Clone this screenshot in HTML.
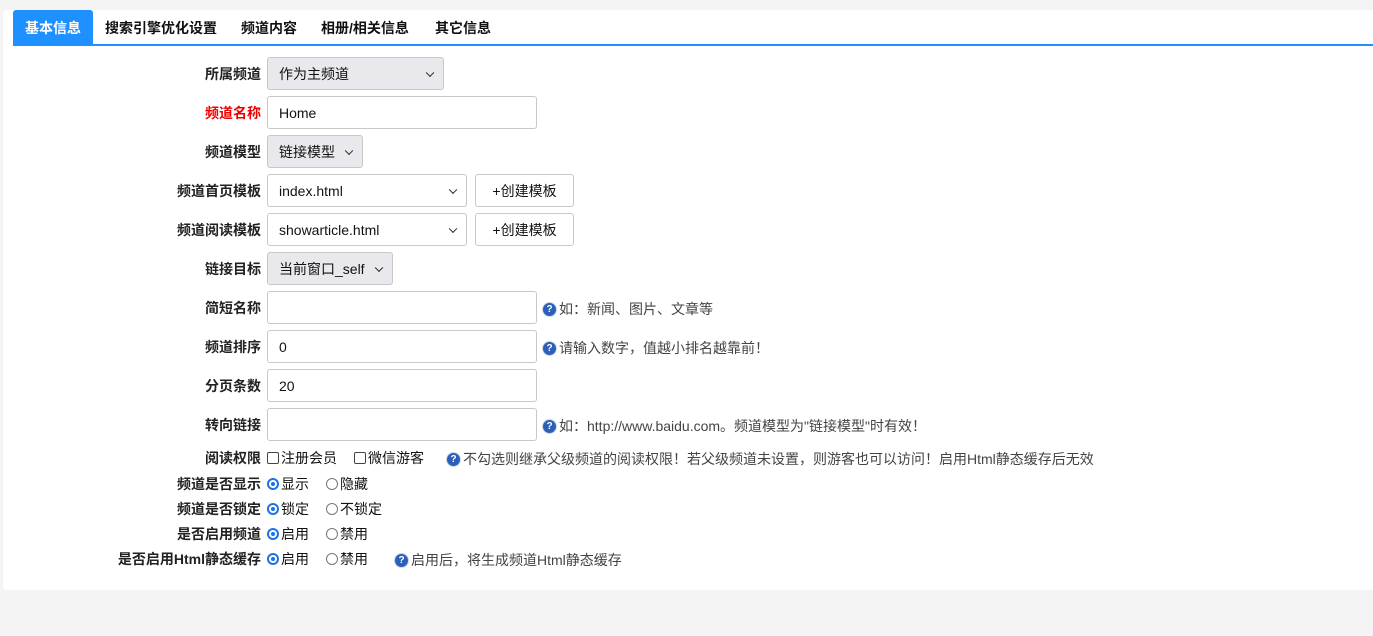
<!DOCTYPE html><html><head><meta charset="utf-8"><style>
body{margin:0;width:1373px;height:636px;background:#f4f4f4;font-family:"Liberation Sans","Noto Sans CJK SC",sans-serif;position:relative;overflow:hidden}
.panel{position:absolute;left:3px;top:10px;width:1380px;height:580px;background:#fff;border-radius:4px}
.tab{position:absolute;top:10px;height:34px;line-height:36px;font-size:14px;font-weight:bold;color:#111}
.line{position:absolute;left:13px;top:44px;width:1360px;height:2px;background:#1e90ff}
.lb{position:absolute;right:1112px;font-size:14px;line-height:18px;font-weight:bold;color:#222;white-space:nowrap;margin-top:1px}
.box{position:absolute;box-sizing:border-box;border:1px solid #c8c8c8;border-radius:3px;background:#fff;font-size:14px;color:#111;padding-left:11px;display:flex;align-items:center;padding-top:1px}
.sel{background:#fff}
.g{background:#e9e9ed}
.sel:after{content:"";position:absolute;right:10px;top:50%;width:5px;height:5px;border-right:1.5px solid #222;border-bottom:1.5px solid #222;transform:translateY(-70%) rotate(45deg)}
.btn{justify-content:center;padding:0;font-size:14px}
.t{position:absolute;font-size:14px;line-height:18px;color:#444;white-space:nowrap;display:flex;align-items:center}
.q{display:inline-block;width:13px;height:13px;border-radius:50%;background:#2b5fb8;color:#fff;font-size:10px;font-weight:bold;text-align:center;line-height:13px;margin-right:3px;box-shadow:0 0 0 1px #c9d6ea}
.r{display:inline-block;width:12px;height:12px;border-radius:50%;border:1px solid #777;box-sizing:border-box;margin-right:2px;position:relative}
.r.on{border:2px solid #1a73e8}
.r.on:after{content:"";position:absolute;left:2px;top:2px;width:4px;height:4px;border-radius:50%;background:#1a73e8}
.c{display:inline-block;width:12px;height:12px;border:1.5px solid #444;box-sizing:border-box;border-radius:2px;margin-right:2px}
</style></head><body>
<div class="panel"></div>
<div class="tab" style="left:13px;width:80px;background:#1e90ff;color:#fff;text-align:center;border-radius:3px 3px 0 0">基本信息</div>
<div class="tab" style="left:105px">搜索引擎优化设置</div>
<div class="tab" style="left:241px">频道内容</div>
<div class="tab" style="left:321px">相册/相关信息</div>
<div class="tab" style="left:435px">其它信息</div>
<div class="line"></div>

<div class="lb" style="top:64px">所属频道</div>
<div class="box sel g" style="left:267px;top:57px;width:177px;height:33px">作为主频道</div>
<div class="lb" style="top:103px;color:#e00">频道名称</div>
<div class="box" style="left:267px;top:96px;width:270px;height:33px">Home</div>
<div class="lb" style="top:142px">频道模型</div>
<div class="box sel g" style="left:267px;top:135px;width:96px;height:33px">链接模型</div>
<div class="lb" style="top:181px">频道首页模板</div>
<div class="box sel" style="left:267px;top:174px;width:200px;height:33px">index.html</div>
<div class="box btn" style="left:475px;top:174px;width:99px;height:33px">+创建模板</div>
<div class="lb" style="top:220px">频道阅读模板</div>
<div class="box sel" style="left:267px;top:213px;width:200px;height:33px">showarticle.html</div>
<div class="box btn" style="left:475px;top:213px;width:99px;height:33px">+创建模板</div>
<div class="lb" style="top:259px">链接目标</div>
<div class="box sel g" style="left:267px;top:252px;width:126px;height:33px">当前窗口_self</div>
<div class="lb" style="top:298px">简短名称</div>
<div class="box" style="left:267px;top:291px;width:270px;height:33px"></div>
<div class="t" style="left:543px;top:300px"><span class="q">?</span>如：新闻、图片、文章等</div>
<div class="lb" style="top:337px">频道排序</div>
<div class="box" style="left:267px;top:330px;width:270px;height:33px">0</div>
<div class="t" style="left:543px;top:339px"><span class="q">?</span>请输入数字，值越小排名越靠前！</div>
<div class="lb" style="top:376px">分页条数</div>
<div class="box" style="left:267px;top:369px;width:270px;height:33px">20</div>
<div class="lb" style="top:415px">转向链接</div>
<div class="box" style="left:267px;top:408px;width:270px;height:33px"></div>
<div class="t" style="left:543px;top:417px"><span class="q">?</span>如：http://www.baidu.com。频道模型为"链接模型"时有效！</div>

<div class="lb" style="top:448px">阅读权限</div>
<div class="t" style="left:267px;top:449px;color:#111"><span class="c"></span>注册会员</div>
<div class="t" style="left:354px;top:449px;color:#111"><span class="c"></span>微信游客</div>
<div class="t" style="left:447px;top:450px"><span class="q">?</span>不勾选则继承父级频道的阅读权限！若父级频道未设置，则游客也可以访问！启用Html静态缓存后无效</div>

<div class="lb" style="top:474px">频道是否显示</div>
<div class="t" style="left:267px;top:475px;color:#111"><span class="r on"></span>显示</div>
<div class="t" style="left:326px;top:475px;color:#111"><span class="r"></span>隐藏</div>
<div class="lb" style="top:499px">频道是否锁定</div>
<div class="t" style="left:267px;top:500px;color:#111"><span class="r on"></span>锁定</div>
<div class="t" style="left:326px;top:500px;color:#111"><span class="r"></span>不锁定</div>
<div class="lb" style="top:524px">是否启用频道</div>
<div class="t" style="left:267px;top:525px;color:#111"><span class="r on"></span>启用</div>
<div class="t" style="left:326px;top:525px;color:#111"><span class="r"></span>禁用</div>
<div class="lb" style="top:549px">是否启用Html静态缓存</div>
<div class="t" style="left:267px;top:550px;color:#111"><span class="r on"></span>启用</div>
<div class="t" style="left:326px;top:550px;color:#111"><span class="r"></span>禁用</div>
<div class="t" style="left:395px;top:551px"><span class="q">?</span>启用后，将生成频道Html静态缓存</div>
</body></html>
